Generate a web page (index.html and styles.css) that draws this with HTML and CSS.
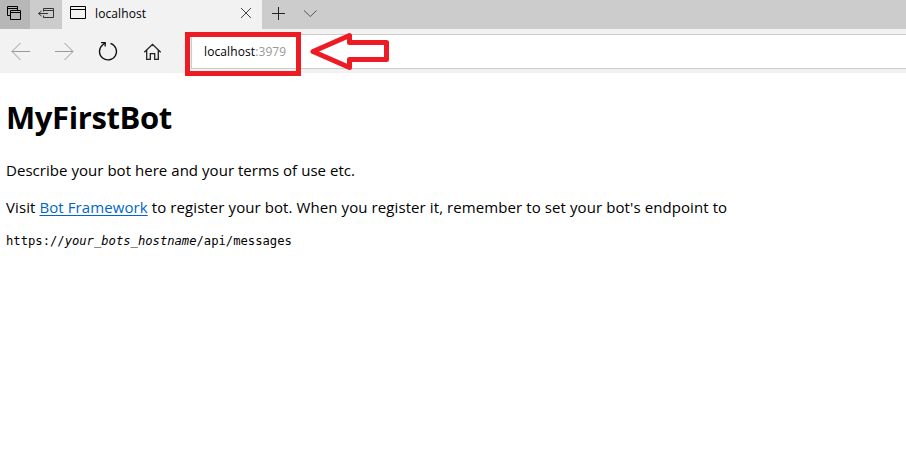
FILE: index.html
```html
<!DOCTYPE html>
<html lang="en">
<head>
<meta charset="utf-8">
<title>localhost</title>
<link rel="stylesheet" href="styles.css">
</head>
<body>
<header class="browser">
  <div class="tabs">
    <button class="tool tool-dark" aria-label="Tabs set aside"><svg width="30" height="29" viewBox="0 0 30 29"><path d="M11 15.500H7.500V6.500H17.500V10M7 8.500H18M10.500 10.500H20.500V19.500H10.500ZM10 12.500H21" stroke="#000"/></svg></button>
    <button class="tool" aria-label="Set tabs aside"><svg width="32" height="29" viewBox="30 0 32 29"><path d="M43.500 11.500V8.500H53.500V17.500H43.500V15.500M43 10.500H54M38.500 13.500H48M41.500 11L38.500 13.500L41.500 16" stroke="#333"/></svg></button>
    <div class="tab">
      <svg width="18" height="29" viewBox="69 0 18 29"><path d="M70.500 6.500H85.500V18.500H70.500ZM70 9.500H86" stroke="#000"/></svg>
      <span class="tab-title">localhost</span>
      <svg class="close" width="12" height="29" viewBox="240 0 12 29"><path d="M241 8L251 18M251 8L241 18" stroke="#444"/></svg>
    </div>
    <svg width="60" height="29" viewBox="262 0 60 29"><path d="M272 13.500H285M278.500 7V20" stroke="#222"/><path d="M304 10.500L310.300 16.500L316.500 10.500" stroke="#555"/></svg>
  </div>
  <div class="toolbar">
    <svg class="nav" width="191" height="44" viewBox="0 29 191 44">
      <path d="M30 51.500H12M20.500 43L12 51.500L20.500 60M55 51.500H73M64.500 43L73 51.500L64.500 60" stroke="#999"/>
      <path d="M110.500 43.300A8.500 8.500 0 1 1 102.500 44.900L105 43M101 42.600H105.200V46.500" stroke="#111" stroke-width="1.300"/>
      <path d="M144.300 52.300L152.500 44.300L160.700 52.300M146.700 50.500V59.300H150.300V53.700H154.700V59.300H158.300V50.500" stroke="#222" stroke-width="1.300"/>
    </svg>
    <div class="address"><span>localhost</span><span class="port">:3979</span></div>
  </div>
  <div class="highlight"></div>
  <svg class="pointer" width="82" height="42" viewBox="309 31 82 42"><path d="M313 51.500L349.500 35.500V42.500H386.500V59.500H349.500V67.500Z" stroke="#ed1c24" stroke-width="5" stroke-linejoin="round"/></svg>
</header>
<main>
  <h1>MyFirstBot</h1>
  <p class="intro">Describe your bot here and your terms of use etc.</p>
  <p class="register">Visit <a href="#">Bot Framework</a> to register your bot. When you register it, remember to set your bot's endpoint to</p>
  <code>https://<i>your_bots_hostname</i>/api/messages</code>
</main>
</body>
</html>
```
FILE: styles.css
```css
* { box-sizing: border-box; }
body { margin: 0; background: #fff; color: #000; font-family: "Open Sans", "Noto Sans", sans-serif; overflow: hidden; }
svg { display: block; flex: none; fill: none; }
.browser { position: relative; }
.tabs { display: flex; height: 29px; background: #ccc; }
.tool { padding: 0; border: 0; background: #ccc; }
.tool-dark { background: #b7b7b7; }
.tab { display: flex; width: 200px; padding: 0 10px 0 7px; background: #f2f2f2; }
.tab-title { margin-left: 8px; font-size: 12px; letter-spacing: 0.1px; line-height: 27px; white-space: nowrap; }
.close { margin-left: auto; }
.toolbar { display: flex; height: 44px; background: #f2f2f2; }
.address { flex: 1; height: 35px; margin-top: 5px; padding-left: 12px; border: 1px solid #ccc; border-right: 0; background: #fff; font-size: 12px; letter-spacing: 0.1px; line-height: 33px; }
.port { color: #999; }
.highlight { position: absolute; left: 185px; top: 32px; width: 116px; height: 44px; border: 5px solid #ed1c24; }
.pointer { position: absolute; left: 309px; top: 31px; }
main { padding: 22px 6px 0; white-space: nowrap; }
h1 { margin: 0; font-size: 31px; line-height: 44px; font-weight: 700; letter-spacing: -0.4px; }
p { margin: 0; font-size: 15px; line-height: 22px; }
.intro { margin-top: 20px; letter-spacing: 0.04px; }
.register { margin-top: 15px; letter-spacing: 0.09px; }
a { color: #0066cc; text-decoration: underline; text-underline-offset: 2px; }
code { display: block; margin-top: 14px; font: 12.180px/18px "DejaVu Sans Mono", monospace; }
```
